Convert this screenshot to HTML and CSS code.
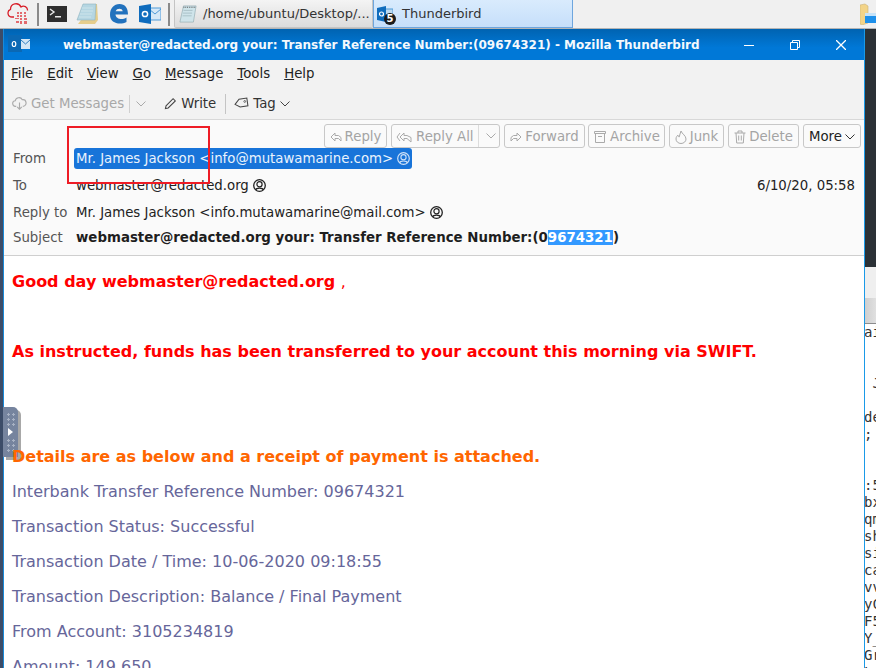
FILE: index.html
```html
<!DOCTYPE html>
<html lang="en">
<head>
<meta charset="utf-8">
<title>Thunderbird</title>
<link rel="stylesheet" href="styles.css">
</head>
<body>
<div class="screen">
  <header class="taskbar">
    <svg class="tb-icon cloud" viewBox="0 0 22 24" width="22" height="24"><path d="M7 15H5A4 4 0 0 1 3.500 7.300 5.500 5.500 0 0 1 14 5 4 4 0 0 1 20.500 8.500" fill="none" stroke="#d8202a" stroke-width="1.300"/><g fill="#e26a6e"><rect x="10" y="10" width="2" height="2"/><rect x="13" y="10" width="2" height="2"/><rect x="17" y="10" width="2" height="2"/><rect x="10" y="13" width="2" height="2"/><rect x="13" y="13" width="2" height="2"/><rect x="17" y="13" width="2" height="2"/><rect x="8" y="16" width="4" height="1"/><rect x="13" y="16" width="2" height="2"/><rect x="17" y="16" width="3" height="2"/><rect x="9" y="19" width="3" height="2"/><rect x="13" y="19" width="2" height="3"/><rect x="17" y="19" width="3" height="3"/></g></svg>
    <span class="sep sep-a"></span>
    <svg class="tb-icon term" viewBox="0 0 20 16" width="20" height="16"><rect width="20" height="16" fill="#2e2e2e"/><path d="M3 3l4 3-4 3" fill="none" stroke="#e8e8e8" stroke-width="1.400"/><rect x="8" y="10" width="6" height="1.500" fill="#e8e8e8"/></svg>
    <svg class="tb-icon note" viewBox="0 0 22 22" width="22" height="22"><path d="M9 1h12l1 16-3 4H2l3-4z" fill="#e5cd8c"/><path d="M7 1h13l-1 16H1z" fill="#b5d6e2" stroke="#8fb3c0" stroke-width=".6"/><path d="M6 5h11M5 8h12M4 11h12M3 14h12" stroke="#d4e8ee" stroke-width=".8"/></svg>
    <svg class="tb-icon edge" viewBox="0 0 20 22" width="20" height="22"><path d="M1 12C1 5 5 1 10.500 1 16 1 19 5 19 11.500H6.500c.3 4.500 6.500 6 11 3v4.500c-7 3.500-16.500 1-16.500-7zM6.700 8.300h7C13.500 5 7.500 5 6.700 8.300z" fill="#2272bd"/></svg>
    <svg class="tb-icon outlook" viewBox="0 0 22 20" width="22" height="20"><rect x="10" y="4" width="12" height="12" fill="#d6e8f7" stroke="#4f9bd8"/><path d="M10 5l6 5 6-5" fill="none" stroke="#4f9bd8"/><path d="M0 2l12-2v20L0 18z" fill="#0f6cbd"/><circle cx="6" cy="10" r="2.600" fill="none" stroke="#fff" stroke-width="1.500"/></svg>
    <span class="sep sep-b"></span>
    <div class="task task-idle">
      <svg class="task-note" viewBox="0 0 20 20" width="18" height="18"><path d="M5 1h14l-3 18H1z" fill="#cfe4ea" stroke="#8fa9b0" stroke-width=".7"/><path d="M5 2.500h13" stroke="#555" stroke-width="1.200" stroke-dasharray="1 1"/><path d="M5 6h10M4.500 9h10M4 12h10" stroke="#9db5bb" stroke-width=".8"/></svg>
      <span>/home/ubuntu/Desktop/...</span>
    </div>
    <div class="task task-active">
      <span class="task-badge-wrap">
        <svg viewBox="0 0 16 16" width="16" height="16"><rect x="7" y="3" width="9" height="9" fill="#bcd9f0" stroke="#4f9bd8"/><path d="M0 2l9-2v16l-9-2z" fill="#0f6cbd"/><circle cx="4.500" cy="8" r="2" fill="none" stroke="#fff" stroke-width="1.200"/></svg>
        <span class="badge">5</span>
      </span>
      <span>Thunderbird</span>
    </div>
    <svg class="folder" viewBox="0 0 16 22" width="16" height="22"><path d="M0 2l5-1 3 2v17l-6 2-2-1z" fill="#f3d488" stroke="#c9b27a" stroke-width=".6"/><rect x="5" y="11" width="11" height="9" fill="#1e90ea"/><rect x="5" y="10" width="11" height="3" fill="#c7e3f8"/></svg>
  </header>

  <div class="desk">
    <div class="strip-left"></div>
    <main class="window">
      <div class="titlebar">
        <svg class="win-icon" viewBox="0 0 22 17" width="22" height="17"><rect x="0" y="0" width="14" height="17" fill="#0a68b4"/><rect x="13" y="4" width="9" height="10" fill="#d4e6f5"/><path d="M13 5l4.500 4L22 5" fill="none" stroke="#0a68b4" stroke-width=".8"/><ellipse cx="6" cy="9" rx="1.800" ry="2.500" fill="none" stroke="#fff" stroke-width="1.200"/></svg>
        <div class="title-text">webmaster@redacted.org your: Transfer Reference Number:(09674321) - Mozilla Thunderbird</div>
        <svg class="ctl ctl-min" viewBox="0 0 10 10" width="10" height="10"><path d="M0 5.500h10" stroke="#fff"/></svg>
        <svg class="ctl ctl-max" viewBox="0 0 10 10" width="10" height="10"><path d="M.5 2.500h7v7h-7zM2.500 2.500v-2h7v7h-2" fill="none" stroke="#fff"/></svg>
        <svg class="ctl ctl-close" viewBox="0 0 10 10" width="10" height="10"><path d="M0 0l10 10M10 0L0 10" stroke="#fff" stroke-width="1.300"/></svg>
      </div>

      <nav class="menubar">
        <span><u>F</u>ile</span><span><u>E</u>dit</span><span><u>V</u>iew</span><span><u>G</u>o</span><span><u>M</u>essage</span><span><u>T</u>ools</span><span><u>H</u>elp</span>
      </nav>

      <div class="toolbar">
        <span class="tool tool-get">
          <svg viewBox="0 0 16 16" width="15" height="15"><path d="M4.500 11H4A3 3 0 0 1 3.500 5 4 4 0 0 1 11 4a3.500 3.500 0 0 1 1 7h-.500" fill="none" stroke="#aaa" stroke-width="1.200"/><path d="M8 7v7M5.500 11.500L8 14l2.500-2.500" fill="none" stroke="#aaa" stroke-width="1.200"/></svg>
          Get Messages
        </span>
        <span class="tool-div"></span>
        <svg class="chev chev-get" viewBox="0 0 10 6" width="10" height="6"><path d="M.5.500L5 5 9.500.500" fill="none" stroke="#aaa"/></svg>
        <span class="tool tool-write">
          <svg viewBox="0 0 14 14" width="13" height="13"><path d="M1.500 12.500l.7-3L9.800 1.800l2.400 2.400-7.700 7.600z" fill="none" stroke="#444" stroke-width="1.100"/></svg>
          Write
        </span>
        <span class="tool-div tool-div-b"></span>
        <span class="tool tool-tag">
          <svg viewBox="0 0 16 14" width="15" height="13"><path d="M1 7l5-5h8.500v8.500H6z" transform="rotate(-8 8 7)" fill="none" stroke="#444" stroke-width="1.100"/><circle cx="11.500" cy="4.800" r="1" fill="none" stroke="#444" stroke-width=".8"/></svg>
          Tag
          <svg class="chev-tag" viewBox="0 0 10 6" width="10" height="6"><path d="M.5.500L5 5 9.500.500" fill="none" stroke="#444"/></svg>
        </span>
      </div>

      <section class="msg-head">
        <div class="actions">
          <span class="btn btn-reply"><svg viewBox="0 0 12 12" width="12" height="12"><path d="M5 2L1 6l4 4V7.500h3.500L11 10V6.500L8.500 4.500H5z" fill="none" stroke="#aaa"/></svg>Reply</span>
          <span class="btn btn-all"><span class="btn-main"><svg viewBox="0 0 16 12" width="16" height="12"><path d="M4 2L1 6l3 4M8 2L4 6l4 4V7.500h3L15 11V6.500l-4-2H8z" fill="none" stroke="#aaa"/></svg>Reply All</span><span class="btn-drop"><svg viewBox="0 0 10 6" width="10" height="6"><path d="M.5.500L5 5 9.500.500" fill="none" stroke="#aaa"/></svg></span></span>
          <span class="btn btn-fwd"><svg viewBox="0 0 12 12" width="12" height="12"><path d="M7 2l4 4-4 4V7.500H3.500L1 10V6.500l2.500-2H7z" fill="none" stroke="#aaa"/></svg>Forward</span>
          <span class="btn btn-arc"><svg viewBox="0 0 14 14" width="14" height="14"><path d="M1.500 1.500h11v2h-11zM2.500 3.500v9h9v-9M5 6.500h4" fill="none" stroke="#aaa"/></svg>Archive</span>
          <span class="btn btn-junk"><svg viewBox="0 0 12 14" width="12" height="14"><path d="M6 1c1 3 5 4.500 5 8a5 4.500 0 0 1-10 0c0-2 1-3 2-4 0 1 .5 2 1.200 2C5 5 5 3 6 1z" fill="none" stroke="#aaa"/></svg>Junk</span>
          <span class="btn btn-del"><svg viewBox="0 0 12 14" width="12" height="14"><path d="M.5 3h11M4 3V1h4v2M2 3l.7 10h6.600L10 3M4.700 5.500v5M7.300 5.500v5" fill="none" stroke="#aaa"/></svg>Delete</span>
          <span class="btn btn-more">More<svg viewBox="0 0 10 6" width="10" height="6"><path d="M.5.500L5 5 9.500.500" fill="none" stroke="#333"/></svg></span>
        </div>
        <div class="row row-from">
          <span class="label">From</span>
          <span class="pill">Mr. James Jackson &lt;info@mutawamarine.com&gt;
            <svg class="person" viewBox="0 0 13 13" width="13" height="13"><circle cx="6.500" cy="6.500" r="5.800" fill="none" stroke="#cfe2f8" stroke-width="1.200"/><circle cx="6.500" cy="5.200" r="2.600" fill="none" stroke="#cfe2f8" stroke-width="1.100"/><path d="M2.500 11c.8-2.600 7.200-2.600 8 0" fill="none" stroke="#cfe2f8" stroke-width="1.100"/></svg>
          </span>
        </div>
        <div class="row row-to">
          <span class="label">To</span>
          <span class="val">webmaster@redacted.org
            <svg class="person" viewBox="0 0 13 13" width="13" height="13"><circle cx="6.500" cy="6.500" r="5.800" fill="none" stroke="#222" stroke-width="1.300"/><circle cx="6.500" cy="5.200" r="2.600" fill="none" stroke="#222" stroke-width="1.200"/><path d="M2.500 11c.8-2.600 7.200-2.600 8 0" fill="none" stroke="#222" stroke-width="1.200"/></svg>
          </span>
          <span class="date">6/10/20, 05:58</span>
        </div>
        <div class="row row-reply">
          <span class="label">Reply to</span>
          <span class="val">Mr. James Jackson &lt;info.mutawamarine@mail.com&gt;
            <svg class="person" viewBox="0 0 13 13" width="13" height="13"><circle cx="6.500" cy="6.500" r="5.800" fill="none" stroke="#222" stroke-width="1.300"/><circle cx="6.500" cy="5.200" r="2.600" fill="none" stroke="#222" stroke-width="1.200"/><path d="M2.500 11c.8-2.600 7.200-2.600 8 0" fill="none" stroke="#222" stroke-width="1.200"/></svg>
          </span>
        </div>
        <div class="row row-subj">
          <span class="label">Subject</span>
          <span class="val subj">webmaster@redacted.org your: Transfer Reference Number:(0<span class="sel">9674321</span>)</span>
        </div>
      </section>

      <article class="msg-body">
        <p class="red">Good day webmaster@redacted.org <span class="thin">,</span></p>
        <p class="blank">&nbsp;</p>
        <p class="red">As instructed, funds has been transferred to your account this morning via SWIFT.</p>
        <p class="blank">&nbsp;</p>
        <p class="blank">&nbsp;</p>
        <p class="orange">Details are as below and a receipt of payment is attached.</p>
        <p class="info">Interbank Transfer Reference Number: 09674321</p>
        <p class="info">Transaction Status: Successful</p>
        <p class="info">Transaction Date / Time: 10-06-2020 09:18:55</p>
        <p class="info">Transaction Description: Balance / Final Payment</p>
        <p class="info">From Account: 3105234819</p>
        <p class="info">Amount: 149,650</p>
      </article>
    </main>
    <aside class="strip-right">
      <div class="sr-dark"></div>
      <div class="sr-light"></div>
      <div class="sr-grey"></div>
      <pre class="sr-term">ai


 J

de
;


:5
bx
qm
sh
si
ca
vv
yC
F5
Y_
Gr
Lo</pre>
    </aside>
  </div>

  <div class="red-box"></div>
  <div class="handle">
    <span class="dots"></span>
    <span class="handle-arrow"></span>
    <span class="dots"></span>
  </div>
</div>
</body>
</html>
```

FILE: styles.css
```css
* { box-sizing: border-box; }
html, body { margin: 0; padding: 0; height: 100%; overflow: hidden; }
body { font-family: "DejaVu Sans", sans-serif; background: #fff; }

.screen { position: relative; width: 876px; height: 668px; overflow: hidden; display: flex; flex-direction: column; }

/* taskbar */
.taskbar { height: 29px; flex: none; display: flex; align-items: center; background: #f0f0f0; border-bottom: 1px solid #b4b4b4; padding-left: 7px; }
.tb-icon { flex: none; display: block; }
.sep { width: 2px; height: 23px; background: #8a8a8a; flex: none; }
.sep-a { margin-left: 8px; margin-right: 8px; }
.term { margin-right: 9px; }
.note { margin-right: 11px; }
.edge { margin-right: 10px; }
.outlook { margin-right: 7px; }
.sep-b { margin-right: 4px; }
.task { height: 28px; display: flex; align-items: center; font-size: 13px; color: #333; flex: none; }
.task-idle { width: 199px; padding-left: 4px; gap: 6px; background: linear-gradient(#f4f4f4, #dcdcdc); border: 1px solid #c4c4c4; border-top: 0; border-radius: 0 0 2px 2px; }
.task-active { width: 200px; padding-left: 3px; gap: 9px; background: linear-gradient(#d9ebfd, #c6dffa); border: 1px solid #6ea6de; border-top: 0; }
.task-badge-wrap { position: relative; width: 16px; height: 16px; flex: none; }
.task-badge-wrap svg { display: block; }
.badge { position: absolute; left: 7px; top: 7px; width: 12px; height: 12px; border-radius: 50%; background: #1c1c1c; color: #fff; font-size: 10px; font-weight: 700; line-height: 12px; text-align: center; }
.folder { margin-left: auto; flex: none; }

/* desk */
.desk { flex: 1; min-height: 0; display: flex; }
.strip-left { width: 3px; flex: none; background: #3c4c68; }
.window { width: 862px; flex: none; display: flex; flex-direction: column; border-left: 1px solid #1a8ad8; border-right: 1px solid #1a9ae8; background: #fff; overflow: hidden; }

.titlebar { height: 31px; flex: none; display: flex; align-items: center; background: linear-gradient(#0063b1, #0078d7 60%); color: #fff; position: relative; }
.win-icon { position: absolute; left: 4px; top: 6px; }
.title-text { margin-left: 59px; width: 677px; flex: none; font-size: 12px; font-weight: 700; white-space: nowrap; letter-spacing: 0; color: #f4f9fd; }
.ctl { flex: none; display: block; }
.ctl-min { margin-left: 4px; }
.ctl-max { margin-left: 36px; }
.ctl-close { margin-left: 36px; }

.menubar { height: 30px; flex: none; background: #f2f2f2; display: flex; align-items: center; padding: 0 0 4px 7px; gap: 14px; font-size: 13.300px; color: #222; }
.toolbar { height: 30px; flex: none; background: #f2f2f2; display: flex; align-items: center; padding: 0 0 2px 8px; font-size: 13.300px; color: #333; border-bottom: 1px solid #d8d8d8; }
.tool { display: inline-flex; align-items: center; gap: 4px; white-space: nowrap; }
.tool-get { color: #a8a8a8; }
.tool-div { width: 1px; height: 18px; background: #d0d0d0; margin-left: 5px; }
.chev-get { margin-left: 6px; }
.tool-write { margin-left: 18px; }
.tool-div-b { margin-left: 9px; height: 20px; background: #c4c4c4; }
.tool-tag { margin-left: 8px; }
.chev-tag { margin-left: 0; }

/* message head */
.msg-head { height: 136px; flex: none; background: #fafafa; border-bottom: 1px solid #cfcfcf; display: flex; flex-direction: column; font-size: 13.300px; color: #222; }
.actions { display: flex; justify-content: flex-end; gap: 4px; height: 24px; margin-top: 4px; padding-right: 3px; flex: none; }
.btn { display: inline-flex; align-items: center; justify-content: center; gap: 3px; height: 24px; padding-top: 1px; border: 1px solid #c8c8c8; border-radius: 3px; color: #a4a4a4; background: #fafafa; white-space: nowrap; }
.btn-reply { width: 63px; }
.btn-all { width: 109px; justify-content: flex-start; padding-top: 0; }
.btn-main { display: inline-flex; align-items: center; gap: 4px; padding: 1px 0 0 4px; width: 87px; height: 100%; border-right: 1px solid #dcdcdc; }
.btn-drop { display: inline-flex; align-items: center; justify-content: center; flex: 1; }
.btn-fwd { width: 81px; }
.btn-arc { width: 77px; margin-left: -1px; }
.btn-junk { width: 55px; }
.btn-del { width: 71px; }
.btn-more { width: 58px; color: #222; }

.row { display: flex; align-items: center; flex: none; height: 21px; padding-left: 9px; padding-right: 9px; }
.label { width: 63px; flex: none; color: #555; }
.pill { display: inline-flex; align-items: center; gap: 4px; height: 21px; padding: 0 2px 0 2px; margin-left: -2px; background: #1874d9; color: #eaf3fd; border-radius: 3px; white-space: nowrap; }
.val { display: inline-flex; align-items: center; gap: 4px; white-space: nowrap; }
.val.subj { font-size: 13.360px; font-weight: 700; white-space: pre; display: inline; color: #1e1e1e; }
.sel { background: #3399ff; color: #fff; }
.person { display: block; flex: none; }
.date { margin-left: auto; }
.row-to { margin-top: 6px; }
.row-reply { margin-top: 6px; }
.row-subj { margin-top: 4px; }

/* body: transparent and above the side handle, so the text lies over it */
.msg-body { flex: 1; min-height: 0; overflow: hidden; padding: 8px 0 0 8px; font-size: 16px; position: relative; z-index: 2; }
.msg-body p { margin: 0; line-height: 35px; white-space: nowrap; }
.red { color: #ff0000; font-weight: 700; }
.thin { font-weight: 400; }
.orange { color: #ff6600; font-weight: 700; }
.info { color: #66669a; }

/* right strip */
.strip-right { flex: 1; min-width: 0; display: flex; flex-direction: column; overflow: hidden; background: #fff; }
.sr-dark { height: 238px; flex: none; background: #2b3136; }
.sr-light { height: 31px; flex: none; background: #efefef; }
.sr-grey { height: 26px; flex: none; background: linear-gradient(90deg, #cfcfcf, #e0e0e0); border-bottom: 1px solid #8c8c8c; }
.sr-term { margin: 0 0 0 -1px; font-family: "DejaVu Sans Mono", monospace; font-size: 14px; line-height: 17px; color: #333; }

/* overlays */
.red-box { position: absolute; left: 67px; top: 126px; width: 143px; height: 58px; border: 2px solid #ee1c25; z-index: 3; }
.handle { position: absolute; z-index: 1; left: 3px; top: 407px; width: 15px; height: 50px; background: #76849e; border-radius: 0 5px 0 0; box-shadow: 3px 3px 0 #a8a8a8; display: flex; flex-direction: column; align-items: center; padding-top: 5px; }
.dots { width: 10px; height: 15px; background-image: radial-gradient(circle, #a8b2c4 1.200px, transparent 1.300px); background-size: 5px 5px; flex: none; }
.handle-arrow { width: 0; height: 0; border-left: 5px solid #fff; border-top: 4px solid transparent; border-bottom: 4px solid transparent; margin: 1px 0 2px; flex: none; }
```
